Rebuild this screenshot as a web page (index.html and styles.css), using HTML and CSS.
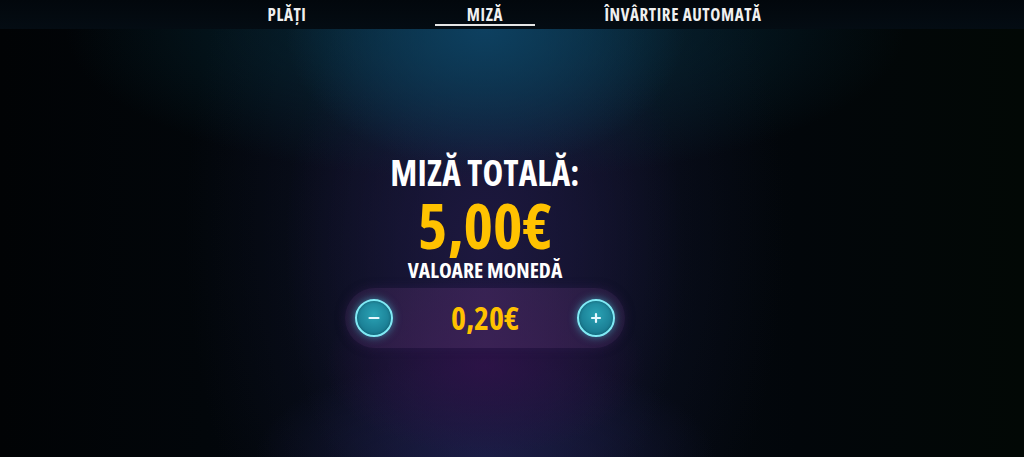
FILE: index.html
```html
<!DOCTYPE html>
<html lang="ro">
<head>
<meta charset="utf-8">
<title>Miză</title>
<link rel="stylesheet" href="styles.css">
</head>
<body>
<div class="screen">
  <nav class="tabs">
    <div class="tab">PLĂȚI</div>
    <div class="tab active">MIZĂ</div>
    <div class="tab">ÎNVÂRTIRE AUTOMATĂ</div>
  </nav>
  <main class="content">
    <div class="title">MIZĂ TOTALĂ:</div>
    <div class="total">5,00€</div>
    <div class="label">VALOARE MONEDĂ</div>
    <div class="stepper">
      <button class="round" aria-label="minus"><svg viewBox="0 0 16 16" width="16" height="16"><path d="M3.5 8h9" stroke="#e8f8ff" stroke-width="2.2" stroke-linecap="round"/></svg></button>
      <div class="value">0,20€</div>
      <button class="round" aria-label="plus"><svg viewBox="0 0 16 16" width="16" height="16"><path d="M4 8h8M8 4v8" stroke="#e8f8ff" stroke-width="2.2" stroke-linecap="round"/></svg></button>
    </div>
  </main>
</div>
</body>
</html>
```
FILE: styles.css
```css
html, body {
  margin: 0;
  padding: 0;
  height: 100%;
  background: #02070b;
}
.screen {
  width: 1024px;
  height: 457px;
  overflow: hidden;
  display: flex;
  flex-direction: column;
  font-family: "Open Sans", "DejaVu Sans Condensed", sans-serif;
  font-stretch: 75%;
  font-weight: 700;
  color: #ffffff;
  background:
    radial-gradient(ellipse 160px 90px at 485px 365px, rgba(48, 18, 74, 0.8), rgba(48, 18, 74, 0) 100%),
    radial-gradient(ellipse 230px 100px at 485px 457px, rgba(30, 32, 78, 0.75), rgba(30, 32, 76, 0) 100%),
    radial-gradient(ellipse 200px 140px at 485px 30px, rgba(14, 66, 100, 0.9), rgba(14, 66, 100, 0) 100%),
    radial-gradient(ellipse 420px 150px at 485px 30px, rgba(6, 48, 62, 0.85), rgba(6, 48, 62, 0) 100%),
    radial-gradient(ellipse 200px 330px at 485px 250px, rgba(30, 24, 64, 0.95), rgba(24, 22, 56, 0) 100%),
    radial-gradient(ellipse 300px 480px at 485px 230px, rgba(16, 20, 44, 0.9), rgba(16, 20, 44, 0) 100%),
    linear-gradient(90deg, #010305 0%, #02060a 20%, #060b16 48%, #02060a 78%, #020805 100%);
}
.tabs {
  height: 29px;
  flex: none;
  background: linear-gradient(180deg, #02070c, #040c13);
  display: flex;
  justify-content: center;
  padding-right: 54px;
}
.tab {
  width: 198px;
  text-align: center;
  font-size: 17px;
  line-height: 30px;
  letter-spacing: 0.6px;
  color: #f0f0f0;
  position: relative;
}
.tab.active::after {
  content: "";
  position: absolute;
  left: 49px;
  right: 49px;
  bottom: 3px;
  height: 2px;
  background: #e6e6e6;
}
.content {
  flex: 1;
  display: flex;
  flex-direction: column;
  align-items: center;
  padding-top: 122px;
  padding-right: 54px;
}
.title {
  font-size: 35px;
  line-height: 44px;
  letter-spacing: 0.2px;
}
.total {
  font-size: 63px;
  line-height: 60px;
  color: #ffc200;
}
.label {
  font-size: 21.5px;
  line-height: 28px;
  margin-top: 1px;
}
.stepper {
  margin-top: 4px;
  width: 280px;
  height: 60px;
  border-radius: 30px;
  background: linear-gradient(90deg, rgba(60, 38, 84, 0.45), rgba(64, 38, 90, 0.75) 50%, rgba(60, 38, 84, 0.45));
  display: flex;
  align-items: center;
  justify-content: space-between;
  padding: 0 10px;
  box-sizing: border-box;
  box-shadow: 0 0 10px rgba(50, 30, 80, 0.5);
}
.round {
  width: 38px;
  height: 38px;
  border-radius: 50%;
  border: 2.5px solid #80eaf5;
  background: radial-gradient(circle at 50% 40%, #2aa3b5, #17768d 80%);
  box-shadow: 0 0 8px rgba(80, 220, 240, 0.55), inset 0 0 3px rgba(0,0,0,0.3);
  display: flex;
  align-items: center;
  justify-content: center;
  padding: 0;
  margin: 0;
}
.value {
  font-size: 32px;
  color: #ffc200;
  line-height: 36px;
}
```
